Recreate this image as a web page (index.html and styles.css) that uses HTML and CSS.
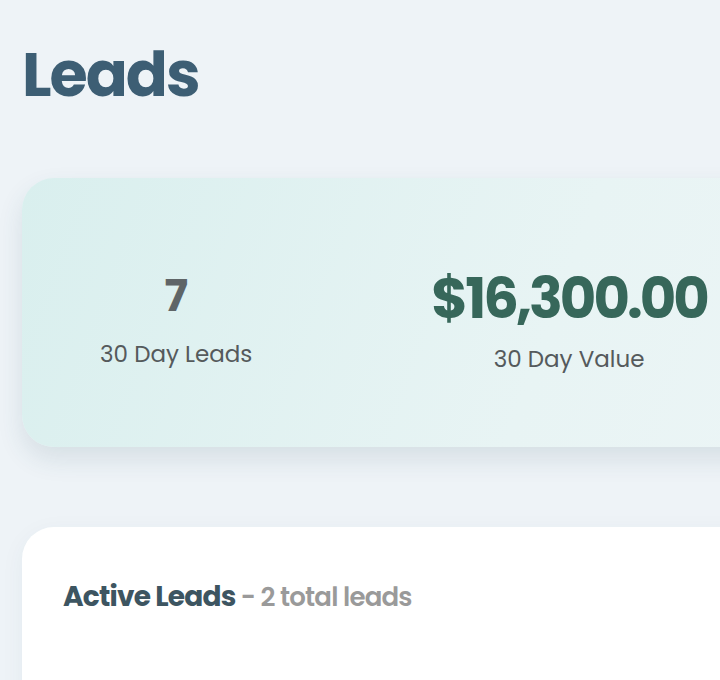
FILE: index.html
```html
<!DOCTYPE html>
<html lang="en">
<head>
  <meta charset="UTF-8" />
  <meta name="viewport" content="width=device-width, initial-scale=1.0" />
  <title>Leads</title>
  <link rel="stylesheet" href="styles.css">
</head>
<body>

  <main class="page">
    <h1 class="page-title">Leads</h1>

    <!-- 30 day summary -->
    <section class="stats">
      <div class="stat">
        <span class="stat-count">7</span>
        <span class="stat-label">30 Day Leads</span>
      </div>
      <div class="stat">
        <span class="stat-value">$16,300.00</span>
        <span class="stat-label">30 Day Value</span>
      </div>
    </section>

    <section class="leads">
      <h2 class="leads-title">Active Leads <span class="leads-total">- 2 total leads</span></h2>
    </section>
  </main>

</body>
</html>
```

FILE: styles.css
```css
* {
  box-sizing: border-box;
  margin: 0;
  padding: 0;
}

body {
  font-family: 'Poppins', 'Inter', 'DejaVu Sans', sans-serif;
  background-color: #eef3f7;
  overflow: hidden;
}

.page {
  width: 1240px;
  padding: 30px 22px 40px;
}

.page-title {
  font-size: 62px;
  font-weight: 700;
  letter-spacing: -2px;
  color: #3d5e74;
  line-height: 90px;
  margin-bottom: 58px;
}

.stats {
  display: flex;
  align-items: center;
  gap: 179px;
  height: 269px;
  padding: 16px 0 0 78px;
  border-radius: 32px;
  background: linear-gradient(110deg, #d9efee 0%, #e8f4f4 45%, #f1f6f8 100%);
  box-shadow: 0 12px 26px rgba(40, 80, 95, 0.12);
}

.stat {
  display: flex;
  flex-direction: column;
  align-items: center;
}

.stat-count {
  font-size: 44px;
  font-weight: 700;
  color: #5f6567;
  line-height: 1.2;
  margin-bottom: 14px;
}

.stat-value {
  font-size: 56px;
  font-weight: 700;
  letter-spacing: -3px;
  color: #37675a;
  line-height: 1.2;
  margin-bottom: 10px;
}

.stat-label {
  font-size: 23px;
  color: #555a5c;
}

.leads {
  margin-top: 80px;
  height: 300px;
  padding: 49px 41px;
  background: #fff;
  border-radius: 32px;
  box-shadow: 0 6px 24px rgba(40, 80, 95, 0.05);
}

.leads-title {
  font-size: 28px;
  font-weight: 700;
  letter-spacing: -0.8px;
  color: #3d5561;
}

.leads-total {
  font-size: 26px;
  font-weight: 600;
  color: #9a9a9a;
}
```
